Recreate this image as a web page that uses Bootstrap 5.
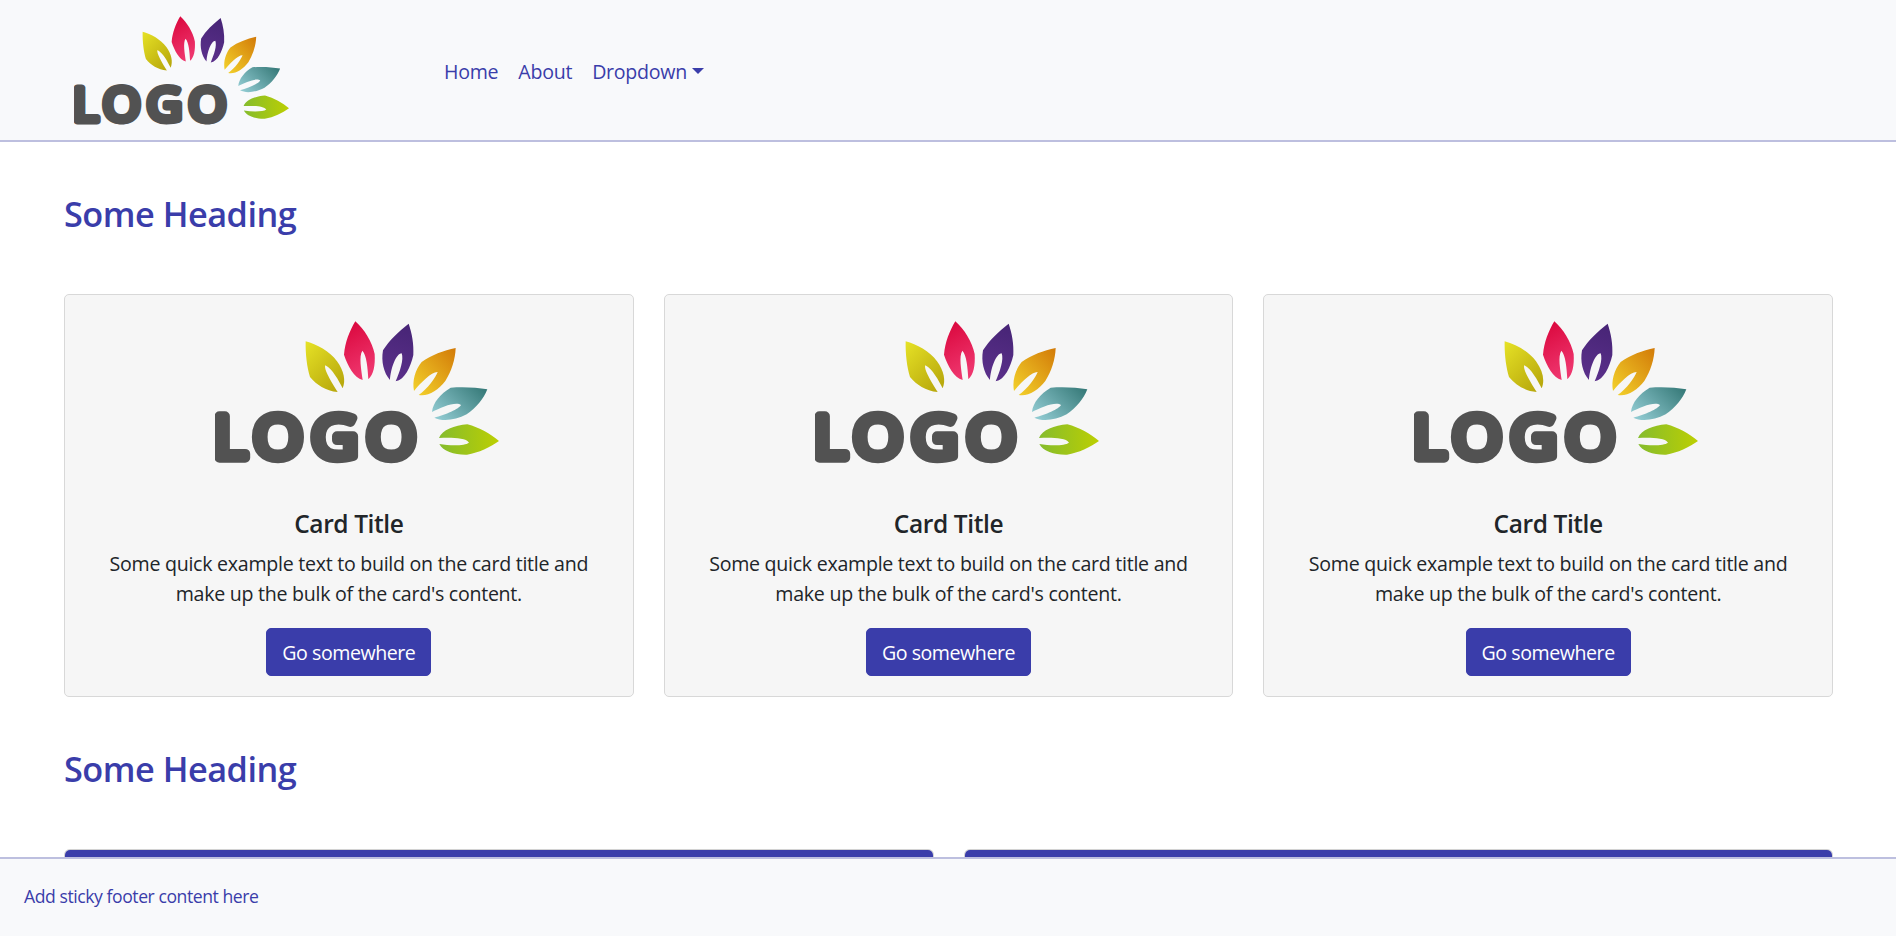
<!DOCTYPE html>
<html lang="en">
<head>
<meta charset="utf-8">
<meta name="viewport" content="width=device-width, initial-scale=1">
<title>Some Heading</title>
<link href="https://cdn.jsdelivr.net/npm/bootstrap@5.3.0/dist/css/bootstrap.min.css" rel="stylesheet">
<style>
:root{--brand:#3a3daa}
html,body{height:100%}
body{font-family:"Open Sans","Noto Sans",sans-serif;font-size:19.6px;line-height:30px;color:#212529;overflow:hidden}
.site-nav{height:142px;background:#f8f9fb;border-bottom:2px solid #bdbfdf;padding:0 0 0 74px}
.site-nav .nav-link,.site-nav .nav-link:hover{color:var(--brand);padding:0 10px;letter-spacing:-.27px}
.site-nav .dropdown-toggle::after{border-top-width:6px;border-left-width:6px;border-right-width:6px;margin-left:5px;vertical-align:5px}
.nav-logo{width:215px;height:110px;display:block}
.nav-list{margin:57px 0 0 145px}
.page{padding:0 63px 0 64px}
h2{font-size:34.3px;font-weight:600;line-height:42px;color:var(--brand);letter-spacing:-.5px}
.first-heading{margin:51px 0 59px}
.second-heading{margin:51px 0 59px}
.grid-row{--bs-gutter-x:30px}
.info-card{background:#f6f6f6;border-color:#d8d8d8;border-radius:5px;height:403px}
.info-card .card-body{padding:45px 16px 0}
.info-card .card-title{font-size:24.5px;font-weight:600;line-height:30px;letter-spacing:-.4px;margin:0 0 10px}
.info-card .card-text{letter-spacing:-.27px;margin:0 0 19px}
.card-logo{width:284px;height:143px;display:block;margin:26px 0 0 150px}
.btn-brand,.btn-brand:hover{background:var(--brand);border-color:var(--brand);color:#fff;font-size:19.6px;line-height:30px;padding:9px 15px 7px;border-radius:5px;letter-spacing:-.45px}
.panel-head{background:var(--brand);height:60px}
.site-foot{height:79px;background:#f8f9fb;border-top:2px solid #bdbfdf;color:var(--brand);font-size:17.6px;padding:22px 24px 0;line-height:30px;letter-spacing:-.44px}
.wordmark{font-family:"Open Sans",sans-serif;font-weight:400;font-size:178px;fill:#525252;stroke:#525252;stroke-width:28px;stroke-linejoin:round}
</style>
</head>
<body>
<svg width="0" height="0" class="position-absolute" aria-hidden="true">
<defs>
<linearGradient id="gy" x1="0" y1="0" x2=".8" y2="1"><stop stop-color="#e6e226"/><stop offset="1" stop-color="#b8a80c"/></linearGradient>
<linearGradient id="gr" x1="0" y1="0" x2=".3" y2="1"><stop stop-color="#d9043a"/><stop offset="1" stop-color="#ee356d"/></linearGradient>
<linearGradient id="gp" x1=".5" y1="0" x2=".3" y2="1"><stop stop-color="#482577"/><stop offset="1" stop-color="#5b308b"/></linearGradient>
<linearGradient id="go" x1="1" y1="0" x2="0" y2="1"><stop stop-color="#d27a08"/><stop offset="1" stop-color="#f4d42c"/></linearGradient>
<linearGradient id="gt" x1="1" y1=".2" x2="0" y2=".8"><stop stop-color="#397c7b"/><stop offset="1" stop-color="#91cbd2"/></linearGradient>
<linearGradient id="gg" x1="0" y1=".5" x2="1" y2=".5"><stop stop-color="#85bc2d"/><stop offset="1" stop-color="#bccf02"/></linearGradient>
<symbol id="logo" viewBox="45 62 852 429" preserveAspectRatio="none">
<text class="wordmark" transform="scale(1.08 1)" y="472" x="37 147 309 462">LOGO</text>
<path fill="url(#gy)" d="M317 123C350 132 389 152 411 183C432 212 438 241 428 264C415 239 398 207 376 195C370 205 394 245 413 275C377 272 349 253 330 230C321 201 316 160 317 123Z"/>
<path fill="url(#gr)" d="M466 63C493 87 516 124 524 161C526 196 521 222 505 237C503 202 500 165 487 151C476 167 484 209 488 239C462 232 443 196 432 163C435 126 449 91 466 63Z"/>
<path fill="url(#gp)" d="M626 70C636 99 642 132 640 164C632 199 615 238 587 243C600 213 612 178 605 159C588 160 572 205 570 239C551 218 543 183 549 150C568 119 596 94 626 70Z"/>
<path fill="url(#go)" d="M767 143C766 177 754 214 736 242C714 270 683 290 656 284C683 266 707 231 713 215C695 214 662 247 642 272C636 241 646 208 665 185C694 164 731 151 767 143Z"/>
<path fill="url(#gt)" d="M862 267C850 297 829 322 800 342C767 359 728 365 703 352C736 344 778 325 783 314C769 302 724 320 696 335C699 307 721 280 752 262C788 259 829 261 862 267Z"/>
<path fill="url(#gg)" d="M897 422C870 441 837 457 801 463C765 464 729 453 718 431C755 437 795 436 807 427C797 411 751 412 717 413C727 389 763 375 802 372C838 382 871 400 897 422Z"/>
</symbol>
</defs>
</svg>
<div class="d-flex flex-column vh-100">
<nav class="site-nav d-flex align-items-start flex-shrink-0">
  <a href="#" aria-label="Logo" class="nav-logo mt-3"><svg class="w-100 h-100"><use href="#logo"/></svg></a>
  <ul class="nav nav-list">
    <li><a class="nav-link" href="#">Home</a></li>
    <li><a class="nav-link" href="#">About</a></li>
    <li class="dropdown"><a class="nav-link dropdown-toggle" href="#" data-bs-toggle="dropdown">Dropdown</a></li>
  </ul>
</nav>
<main class="page flex-fill overflow-hidden">
  <h2 class="first-heading">Some Heading</h2>
  <div class="row grid-row">
    <div class="col-4"><div class="card info-card"><svg class="card-logo"><use href="#logo"/></svg>
      <div class="card-body text-center"><h5 class="card-title">Card Title</h5><p class="card-text">Some quick example text to build on the card title and<br>make up the bulk of the card's content.</p><a href="#" class="btn btn-brand">Go somewhere</a></div></div></div>
    <div class="col-4"><div class="card info-card"><svg class="card-logo"><use href="#logo"/></svg>
      <div class="card-body text-center"><h5 class="card-title">Card Title</h5><p class="card-text">Some quick example text to build on the card title and<br>make up the bulk of the card's content.</p><a href="#" class="btn btn-brand">Go somewhere</a></div></div></div>
    <div class="col-4"><div class="card info-card"><svg class="card-logo"><use href="#logo"/></svg>
      <div class="card-body text-center"><h5 class="card-title">Card Title</h5><p class="card-text">Some quick example text to build on the card title and<br>make up the bulk of the card's content.</p><a href="#" class="btn btn-brand">Go somewhere</a></div></div></div>
  </div>
  <h2 class="second-heading">Some Heading</h2>
  <div class="row grid-row">
    <div class="col-6"><div class="card overflow-hidden"><div class="panel-head"></div></div></div>
    <div class="col-6"><div class="card overflow-hidden"><div class="panel-head"></div></div></div>
  </div>
</main>
<footer class="site-foot flex-shrink-0">Add sticky footer content here</footer>
</div>
<script src="https://cdn.jsdelivr.net/npm/bootstrap@5.3.0/dist/js/bootstrap.bundle.min.js"></script>
</body>
</html>
